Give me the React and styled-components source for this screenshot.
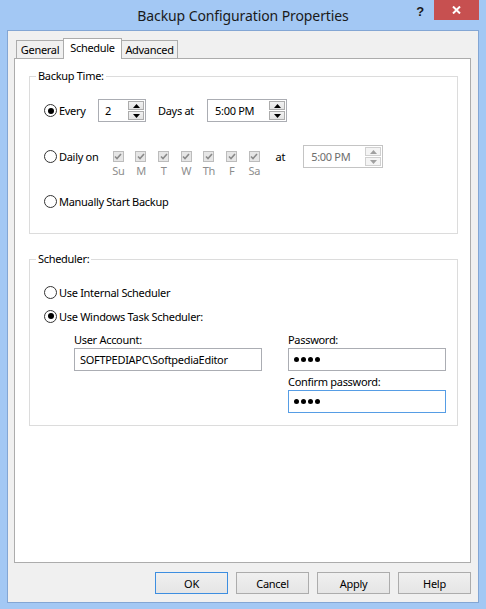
import styled, { createGlobalStyle } from "styled-components";

const UI_FONT = `"Noto Sans", "Open Sans", sans-serif`;

const GlobalStyle = createGlobalStyle`
  html, body {
    margin: 0;
    padding: 0;
    background: #a3c8f4;
  }
  body {
    font-family: ${UI_FONT};
    font-size: 11px;
    letter-spacing: -0.3px;
    color: #000;
  }
  * {
    box-sizing: border-box;
  }
`;

const Window = styled.div`
  width: 486px;
  height: 609px;
  background: #a3c8f4;
  display: flex;
  flex-direction: column;
  overflow: hidden;
`;

const TitleBar = styled.div`
  flex: none;
  height: 30px;
  position: relative;
  display: flex;
  align-items: center;
  justify-content: center;
  font-size: 14px;
  letter-spacing: -0.1px;
  color: #1a1a1a;
  padding-top: 1px;
`;

const TitleControls = styled.div`
  position: absolute;
  top: 0;
  right: 7px;
  display: flex;
  align-items: flex-start;
  gap: 10px;
`;

const HelpGlyph = styled.span`
  font-family: "Liberation Sans", Arial, sans-serif;
  font-weight: 700;
  font-size: 13px;
  line-height: 13px;
  margin-top: 5px;
  color: #1b1b1b;
`;

const CloseButton = styled.div`
  width: 45px;
  height: 20px;
  background: #c75050;
  display: flex;
  align-items: center;
  justify-content: center;
`;

const Body = styled.div`
  flex: 1;
  margin: 0 7px 6px;
  border: 1px solid #83a6d4;
  background: #f0f0f0;
  display: flex;
  flex-direction: column;
  padding: 7px 7px 0 6px;
`;

const TabStrip = styled.div`
  height: 21px;
  display: flex;
  align-items: flex-end;
  padding-left: 2px;
`;

const Tab = styled.div`
  width: ${(p) => p.$w}px;
  height: ${(p) => (p.$active ? 21 : 19)}px;
  padding-bottom: ${(p) => (p.$active ? 3 : 1)}px;
  border: 1px solid #acacac;
  border-bottom: none;
  background: ${(p) => (p.$active ? "#ffffff" : "#f0f0f0")};
  display: flex;
  align-items: center;
  justify-content: center;
  white-space: nowrap;
  position: ${(p) => (p.$active ? "relative" : "static")};
  z-index: ${(p) => (p.$active ? 1 : "auto")};
  margin-left: ${(p) => (p.$first ? 0 : -1)}px;
`;

const Panel = styled.div`
  flex: 1;
  margin-top: -1px;
  background: #ffffff;
  border: 1px solid #acacac;
  display: flex;
  flex-direction: column;
`;

const Group = styled.fieldset`
  margin: ${(p) => p.$top}px 12px 0 14px;
  padding: 0;
  border: 1px solid #dcdcdc;
  min-width: 0;
`;

const GroupLegend = styled.legend`
  margin-left: 6px;
  padding: 0 2px;
  line-height: 14px;
  height: 14px;
`;

const GroupBody = styled.div`
  padding: ${(p) => p.$pad};
  display: flex;
  flex-direction: column;
`;

const EveryRow = styled.div`
  display: grid;
  grid-template-columns: 54px 48px 61px 80px;
  height: 23px;
  align-items: center;
`;

const DailyGrid = styled.div`
  margin-top: 23px;
  display: grid;
  grid-template-columns: 63px repeat(7, 22.67px) 37.6px 80px;
  grid-template-rows: 23px auto;
  align-items: center;
`;

const DayLabel = styled.span`
  justify-self: center;
  margin-top: -4px;
  line-height: 14px;
  color: #8d8d8d;
`;

const InlineText = styled.span`
  padding-left: ${(p) => p.$pad || 0}px;
`;

const RadioRow = styled.div`
  display: flex;
  align-items: center;
  gap: 2px;
  height: 20px;
  margin-top: ${(p) => p.$top || 0}px;
  white-space: nowrap;
`;

const RadioCircle = styled.span`
  flex: none;
  width: 13px;
  height: 13px;
  border-radius: 50%;
  border: 1px solid #333333;
  background: #ffffff;
  display: flex;
  align-items: center;
  justify-content: center;

  &::after {
    content: "";
    width: 6px;
    height: 6px;
    border-radius: 50%;
    background: ${(p) => (p.$checked ? "#000000" : "transparent")};
  }
`;

const CheckBox = styled.span`
  justify-self: center;
  width: 11px;
  height: 11px;
  border: 1px solid #bcbcbc;
  background: #e6e6e6;
  display: flex;
  align-items: center;
  justify-content: center;
`;

const SpinBox = styled.div`
  width: ${(p) => p.$w}px;
  height: 23px;
  border: 1px solid ${(p) => (p.$disabled ? "#c4c4c4" : "#abadb3")};
  background: #ffffff;
  display: flex;
  align-items: center;
  padding-left: ${(p) => p.$pad}px;
  color: ${(p) => (p.$disabled ? "#6d6d6d" : "#000")};
`;

const SpinValue = styled.span`
  flex: 1;
`;

const SpinButtons = styled.div`
  display: flex;
  flex-direction: column;
  gap: 1px;
  margin-right: 1px;
`;

const SpinButton = styled.div`
  width: 16px;
  height: 9px;
  border: 1px solid ${(p) => (p.$disabled ? "#d0d0d0" : "#acacac")};
  background: ${(p) =>
    p.$disabled ? "#f4f4f4" : "linear-gradient(#f2f2f2, #e3e3e3)"};
  display: flex;
  align-items: center;
  justify-content: center;
`;

const Credentials = styled.div`
  margin: 6px 0 0 30px;
  display: grid;
  grid-template-columns: 188px 158px;
  column-gap: 26px;
`;

const Field = styled.div`
  grid-column: ${(p) => p.$col};
  display: flex;
  flex-direction: column;
  margin-top: ${(p) => p.$top || 0}px;
`;

const FieldLabel = styled.span`
  line-height: 16px;
  height: 16px;
`;

const TextBox = styled.div`
  height: 23px;
  border: 1px solid ${(p) => (p.$focused ? "#569de5" : "#abadb3")};
  background: #ffffff;
  display: flex;
  align-items: center;
  gap: 2px;
  padding-left: 5px;
  white-space: nowrap;
`;

const MaskDot = styled.span`
  width: 5px;
  height: 5px;
  border-radius: 50%;
  background: #000;
`;

const ButtonRow = styled.div`
  display: flex;
  justify-content: flex-end;
  gap: 8px;
  margin: 9px 0 8px;
`;

const DialogButton = styled.button`
  width: 73px;
  height: 22px;
  padding: 0;
  border: 1px solid ${(p) => (p.$default ? "#3d8ee0" : "#acacac")};
  background: linear-gradient(#f0f0f0, #e5e5e5);
  font-family: ${UI_FONT};
  font-size: 11px;
  letter-spacing: -0.3px;
  color: #000;
`;

function Arrow({ up, disabled }) {
  return (
    <svg width="7" height="4" viewBox="0 0 7 4">
      <polygon
        points={up ? "0,4 7,4 3.5,0" : "0,0 7,0 3.5,4"}
        fill={disabled ? "#a0a0a0" : "#000"}
      />
    </svg>
  );
}

function Spinner({ value, width, pad, disabled }) {
  return (
    <SpinBox $w={width} $pad={pad} $disabled={disabled}>
      <SpinValue>{value}</SpinValue>
      <SpinButtons>
        <SpinButton $disabled={disabled}>
          <Arrow up disabled={disabled} />
        </SpinButton>
        <SpinButton $disabled={disabled}>
          <Arrow disabled={disabled} />
        </SpinButton>
      </SpinButtons>
    </SpinBox>
  );
}

function Radio({ checked, label, top }) {
  return (
    <RadioRow $top={top}>
      <RadioCircle $checked={checked} />
      <span>{label}</span>
    </RadioRow>
  );
}

function Check() {
  return (
    <CheckBox>
      <svg width="8" height="7" viewBox="0 0 8 7">
        <polyline
          points="1,3.5 3,5.5 7,1"
          fill="none"
          stroke="#8a8a8a"
          strokeWidth="1.6"
        />
      </svg>
    </CheckBox>
  );
}

function Mask() {
  return (
    <>
      <MaskDot />
      <MaskDot />
      <MaskDot />
      <MaskDot />
    </>
  );
}

const days = ["Su", "M", "T", "W", "Th", "F", "Sa"];

export default function App() {
  return (
    <Window>
      <GlobalStyle />
      <TitleBar>
        Backup Configuration Properties
        <TitleControls>
          <HelpGlyph>?</HelpGlyph>
          <CloseButton>
            <svg width="9" height="8" viewBox="0 0 9 8">
              <path d="M1 0.5 L8 7.5 M8 0.5 L1 7.5" stroke="#fff" strokeWidth="2" />
            </svg>
          </CloseButton>
        </TitleControls>
      </TitleBar>

      <Body>
        <TabStrip>
          <Tab $first $w={48}>General</Tab>
          <Tab $active $w={59}>Schedule</Tab>
          <Tab $w={57}>Advanced</Tab>
        </TabStrip>

        <Panel>
          <Group $top={10}>
            <GroupLegend>Backup Time:</GroupLegend>
            <GroupBody $pad="16px 0 22px 14px">
              <EveryRow>
                <Radio checked label="Every" />
                <Spinner value="2" width={48} pad={6} />
                <InlineText $pad={12}>Days at</InlineText>
                <Spinner value="5:00 PM" width={80} pad={7} />
              </EveryRow>

              <DailyGrid>
                <Radio label="Daily on" />
                {days.map((d) => (
                  <Check key={d} />
                ))}
                <InlineText $pad={10}>at</InlineText>
                <Spinner value="5:00 PM" width={80} pad={7} disabled />
                <span />
                {days.map((d) => (
                  <DayLabel key={d}>{d}</DayLabel>
                ))}
              </DailyGrid>

              <Radio label="Manually Start Backup" top={13} />
            </GroupBody>
          </Group>

          <Group $top={18}>
            <GroupLegend>Scheduler:</GroupLegend>
            <GroupBody $pad="16px 0 12px 14px">
              <Radio label="Use Internal Scheduler" />
              <Radio checked label="Use Windows Task Scheduler:" top={4} />
              <Credentials>
                <Field $col={1}>
                  <FieldLabel>User Account:</FieldLabel>
                  <TextBox>SOFTPEDIAPC\SoftpediaEditor</TextBox>
                </Field>
                <Field $col={2}>
                  <FieldLabel>Password:</FieldLabel>
                  <TextBox>
                    <Mask />
                  </TextBox>
                </Field>
                <Field $col={2} $top={3}>
                  <FieldLabel>Confirm password:</FieldLabel>
                  <TextBox $focused>
                    <Mask />
                  </TextBox>
                </Field>
              </Credentials>
            </GroupBody>
          </Group>
        </Panel>

        <ButtonRow>
          <DialogButton $default>OK</DialogButton>
          <DialogButton>Cancel</DialogButton>
          <DialogButton>Apply</DialogButton>
          <DialogButton>Help</DialogButton>
        </ButtonRow>
      </Body>
    </Window>
  );
}
